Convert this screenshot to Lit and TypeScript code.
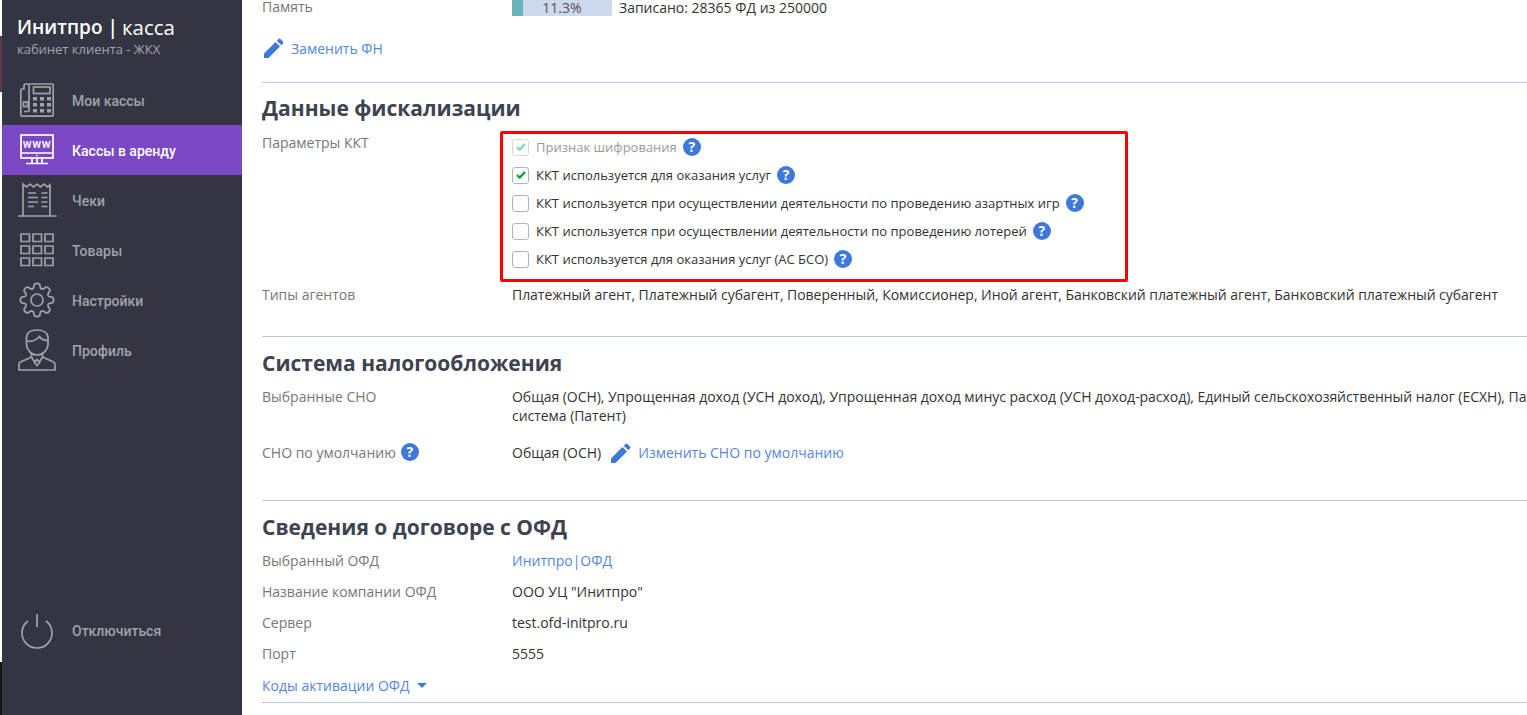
import { LitElement, html, css, svg } from "lit";
import { customElement } from "lit/decorators.js";

function gearPath(): string {
  const cx = 17, cy = 17, teeth = 8, ro = 17, ri = 12.5;
  let d = "";
  for (let i = 0; i < teeth; i++) {
    const a = (i * 2 * Math.PI) / teeth - Math.PI / 2;
    const w = Math.PI / teeth;
    const p = (r: number, t: number) => `${(cx + r * Math.cos(t)).toFixed(2)} ${(cy + r * Math.sin(t)).toFixed(2)}`;
    d += `${i === 0 ? "M" : "L"}${p(ri, a - w * 0.72)} L${p(ro - 1, a - w * 0.42)} Q${p(ro + 0.6, a)} ${p(ro - 1, a + w * 0.42)} L${p(ri, a + w * 0.72)} Q${p(ri - 1, a + w)} `;
    const next = a + 2 * w - w * 0.72;
    d += `${p(ri, next)} `;
  }
  return d + "Z";
}

const icons: Record<string, unknown> = {
  phone: svg`<path d="M9 6V2.500Q9 1 7.500 1H5.500Q4 1 4 2.500V6H2Q.8 6 .8 7.500V32q0 1.200 1.200 1.200h30q1.200 0 1.200-1.200V2q0-1-1-1H9M9 6v21.500q0 1-1 1H4"/><rect x="13.500" y="4" width="16.500" height="6.500"/><rect x="3.500" y="19" width="4" height="4.500"/><path d="M13 14h4v3.500h-4zM20 14h4v3.500h-4zM27 14h4v3.500h-4zM13 20h4v3.500h-4zM20 20h4v3.500h-4zM27 20h4v3.500h-4zM13 26h4v3.500h-4zM20 26h4v3.500h-4zM27 26h4v3.500h-4z" fill="currentColor" stroke="none"/>`,
  www: svg`<rect x="1" y="2" width="32" height="23"/><path d="M1 20h32M17 25v5M12 25.500V30M22 25.500V30M6 30.500h22"/><circle cx="17" cy="22.500" r=".8" fill="currentColor" stroke="none"/><text x="17" y="14.500" text-anchor="middle" class="wtext">www</text>`,
  receipt: svg`<path d="M3 33V1l3.500 3 3.500-3 3.500 3 3.500-3 3.500 3 3.500-3 3.500 3L30 2v31M-2 33h38.500M8 10h8M8 14.500h10M8 19h10M8 23.500h6M21.500 10h6M21.500 14.500h6M21.500 19h6M21.500 23.500h6"/>`,
  grid: svg`<path d="M1 1h8.500v7.500H1zM13 1h8.500v7.500H13zM25 1h8v7.500h-8zM1 13h8.500v7.500H1zM13 13h8.500v7.500H13zM25 13h8v7.500h-8zM1 25h8.500v7.500H1zM13 25h8.500v7.500H13zM25 25h8v7.500h-8z"/>`,
  gear: svg`<circle cx="17" cy="17" r="6"/><path d="${gearPath()}" stroke-linejoin="round"/>`,
  person: svg`<path d="M6.500 9V4.500C6.500-.5 11-3 17-3s11 2.500 11 7.500V11c0 5.500-5 11-11 11S6.500 16.500 6.500 11zM6.500 8c5 1 10-1 13-4.500 1.500 2.500 4.500 4 8.500 4"/><path d="M11.500 20v4L.5 29q-1.500.7-1.500 2.500V37h36v-5.500q0-1.800-1.500-2.500L22.500 24v-4M11.500 24l3 5 2.500-2.500 2.500 2.500 3-5M17 26.500l-2.500 3 2.500 3 2.500-3z"/>`,
  power: svg`<path d="M17 0v13M8 7a15 15 0 1 0 18 0"/>`,
};

const pencil = html`<svg class="pencil" viewBox="0 0 20 20"><path d="M0 20v-4.500L11.500 4 16 8.500 4.500 20zM12.800 2.700 14.500 1q1-1 2 0l2.500 2.500q1 1 0 2L17.300 7.200z"/></svg>`;
const help = html`<span class="help">?</span>`;

const nav = [
  ["phone", "Мои кассы", false],
  ["www", "Кассы в аренду", true],
  ["receipt", "Чеки", false],
  ["grid", "Товары", false],
  ["gear", "Настройки", false],
  ["person", "Профиль", false],
] as const;

const checks: [string, boolean, boolean][] = [
  ["Признак шифрования", true, true],
  ["ККТ используется для оказания услуг", true, false],
  ["ККТ используется при осуществлении деятельности по проведению азартных игр", false, false],
  ["ККТ используется при осуществлении деятельности по проведению лотерей", false, false],
  ["ККТ используется для оказания услуг (АС БСО)", false, false],
];

@customElement("app-root")
export class AppRoot extends LitElement {
  static styles = css`
    :host { display: block; height: 715px; overflow: hidden; background: #fff; font-family: "Open Sans", sans-serif; font-size: 14px; color: #333; }
    * { box-sizing: border-box; }
    .page { display: flex; height: 715px; }
    .edge { width: 2px; display: flex; flex-direction: column; flex: none; }
    .edge i { display: block; }
    .e1 { height: 36px; background: #fff; }
    .e2 { height: 56px; background: #5a3a4c; }
    .e3 { height: 570px; background: #fff; }
    .e4 { flex: 1; background: #14151a; }
    .side { width: 240px; flex: none; background: #333642; display: flex; flex-direction: column; }
    .logo { height: 75px; padding: 15px 0 0 15px; color: #fff; }
    .brand { font-size: 19px; line-height: 24px; font-weight: 600; white-space: nowrap; display: flex; }
    .brand .bar-sep { font-weight: 600; margin: 0 4px 0 5px; }
    .brand .kassa { font-weight: 400; font-size: 20.500px; }
    .sub { font-size: 13px; line-height: 16px; color: #a1a4ad; margin-top: 2px; letter-spacing: -.02px; }
    .item { height: 50px; display: flex; align-items: center; padding-left: 18px; color: #a0a2a9; font-family: Roboto, sans-serif; font-weight: 500; font-size: 14px; }
    .item.on { background: #7a48c4; color: #fff; }
    .item svg { width: 34px; height: 34px; margin-right: 18px; flex: none; fill: none; stroke: currentColor; stroke-width: 1.700; overflow: visible; }
    .item .t { padding-top: 2px; }
    .wtext { font: 500 12px Roboto, sans-serif; letter-spacing: .6px; fill: currentColor; stroke: none; }
    .spacer { flex: 1; }
    .off { margin-bottom: 59px; }
    .main { flex: 1; min-width: 0; overflow: hidden; padding-left: 20px; }
    .content { width: 1350px; }
    .row { display: flex; line-height: 19px; }
    .label { width: 250px; flex: none; color: #777; display: flex; align-items: flex-start; gap: 5px; }
    .value { flex: 1; min-width: 0; color: #333; }
    .tight { letter-spacing: -.04px; }
    .mem { margin-top: -3px; height: 19px; }
    .memv { display: flex; margin-top: 3px; }
    .bar { width: 100px; height: 16px; background: #cdd8ec; border-radius: 0 0 2px 2px; text-align: center; line-height: 16px; color: #555; margin-right: 7px; display: flex; }
    .bar b { width: 11px; background: #67b5b7; flex: none; }
    .bar span { flex: 1; padding-right: 11px; }
    .memt { line-height: 16px; }
    a { color: #5585dc; }
    .pencil { width: 20px; height: 20px; fill: #3f78db; flex: none; }
    .change { display: flex; align-items: center; gap: 7px; margin: 21px 0 0 2px; height: 22px; }
    hr { border: 0; border-top: 1px solid #b7c7e2; margin: 0; }
    .hr1 { margin-top: 23px; }
    .hr2 { margin-top: 32px; }
    .hr3 { margin-top: 37px; }
    .hr4 { margin-top: 7px; }
    h2 { margin: 13px 0 0; font-size: 21px; line-height: 27px; font-weight: 700; color: #3e4350; }
    .h-first { margin-top: 12px; }
    .params { margin-top: 11px; }
    .box { width: 628px; height: 151px; border: 3px solid #f00; border-radius: 2px; margin: -2px 0 0 -12px; padding: 0 0 0 9px; display: flex; flex-direction: column; font-size: 13px; }
    .chks { margin-top: -1px; }
    .chk { height: 28px; display: flex; align-items: center; gap: 7px; white-space: nowrap; }
    .cb { width: 17px; height: 17px; border: 1px solid #a9b3cb; border-radius: 3px; display: flex; align-items: center; justify-content: center; flex: none; background: #fff; }
    .cb svg { width: 10px; height: 8px; fill: none; stroke: #14a03c; stroke-width: 2.600; }
    .dis { color: #999; }
    .dis .cb { border-color: #d4d8df; }
    .dis .cb svg { stroke: #8fd7a4; }
    .chk .help { margin-left: -1px; }
    .help { width: 18px; height: 18px; border-radius: 50%; background: #3f78db; color: #fff; font: 700 14px/18px "Open Sans", sans-serif; text-align: center; flex: none; display: inline-block; }
    .agents { margin-top: 3px; }
    .sno { margin-top: 10px; }
    .sno2 { margin-top: 18px; }
    .line { display: flex; align-items: flex-start; }
    .line .pencil { margin: 0 7px 0 10px; }
    .ofd { margin-top: 10px; }
    .ofd .row { height: 31px; }
    .codes { display: flex; align-items: center; gap: 7px; height: 19px; margin-top: 1px; }
    .tri { width: 0; height: 0; border: 5px solid transparent; border-top: 5px solid #3f78db; border-bottom: 0; }
  `;

  render() {
    return html`<div class="page">
      <div class="edge"><i class="e1"></i><i class="e2"></i><i class="e3"></i><i class="e4"></i></div>
      <nav class="side">
        <div class="logo">
          <div class="brand">Инитпро<span class="bar-sep">|</span><span class="kassa">касса</span></div>
          <div class="sub">кабинет клиента - ЖКХ</div>
        </div>
        ${nav.map(([ic, t, on]) => html`<div class="item ${on ? "on" : ""}"><svg viewBox="0 0 34 34">${icons[ic]}</svg><span class="t">${t}</span></div>`)}
        <div class="spacer"></div>
        <div class="item off"><svg viewBox="0 0 34 34">${icons.power}</svg><span>Отключиться</span></div>
      </nav>
      <main class="main"><div class="content">
        <div class="row mem"><div class="label">Память</div><div class="value memv">
          <div class="bar"><b></b><span>11.3%</span></div><span class="memt">Записано: 28365 ФД из 250000</span></div></div>
        <div class="change">${pencil}<a>Заменить ФН</a></div>
        <hr class="hr1" />
        <h2 class="h-first">Данные фискализации</h2>
        <div class="row params"><div class="label">Параметры ККТ</div><div class="value"><div class="box"><div class="chks">
          ${checks.map(([t, c, d]) => html`<div class="chk ${d ? "dis" : ""}"><span class="cb">${c ? html`<svg viewBox="0 0 11 9"><path d="M1 4.500 4 7.500 10 1"/></svg>` : ""}</span><span>${t}</span>${help}</div>`)}
        </div></div></div></div>
        <div class="row agents"><div class="label">Типы агентов</div><div class="value tight">Платежный агент, Платежный субагент, Поверенный, Комиссионер, Иной агент, Банковский платежный агент, Банковский платежный субагент</div></div>
        <hr class="hr2" />
        <h2>Система налогообложения</h2>
        <div class="row sno"><div class="label">Выбранные СНО</div><div class="value tight">Общая (ОСН), Упрощенная доход (УСН доход), Упрощенная доход минус расход (УСН доход-расход), Единый сельскохозяйственный налог (ЕСХН), Патентная система (Патент)</div></div>
        <div class="row sno2"><div class="label">СНО по умолчанию ${help}</div><div class="value line">Общая (ОСН)${pencil}<a>Изменить СНО по умолчанию</a></div></div>
        <hr class="hr3" />
        <h2>Сведения о договоре с ОФД</h2>
        <div class="ofd">
          <div class="row"><div class="label">Выбранный ОФД</div><div class="value"><a>Инитпро|ОФД</a></div></div>
          <div class="row"><div class="label">Название компании ОФД</div><div class="value">ООО УЦ "Инитпро"</div></div>
          <div class="row"><div class="label">Сервер</div><div class="value">test.ofd-initpro.ru</div></div>
          <div class="row"><div class="label">Порт</div><div class="value">5555</div></div>
        </div>
        <div class="codes"><a>Коды активации ОФД</a><span class="tri"></span></div>
        <hr class="hr4" />
      </div></main>
    </div>`;
  }
}
